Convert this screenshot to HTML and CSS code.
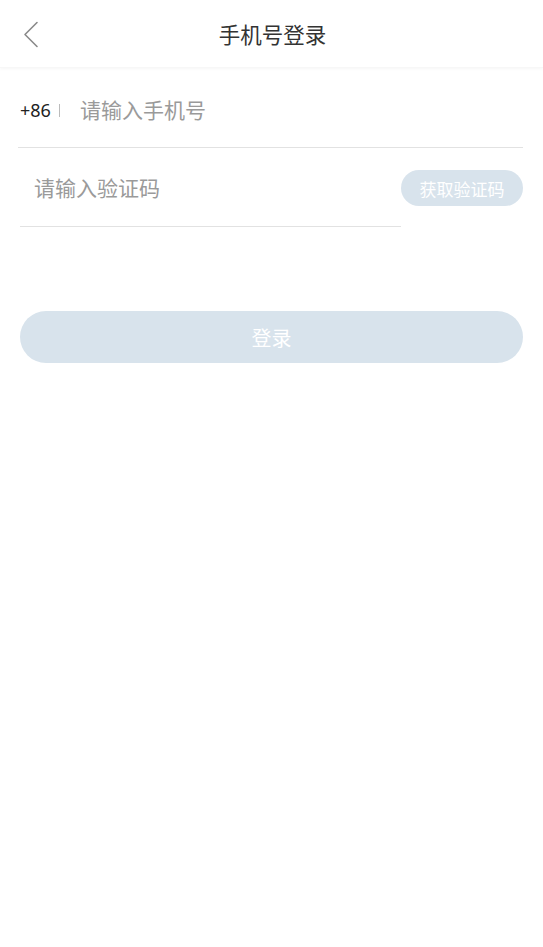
FILE: index.html
```html
<!DOCTYPE html>
<html lang="zh-CN">
<head>
<meta charset="utf-8">
<title>手机号登录</title>
<link rel="stylesheet" href="styles.css">
</head>
<body>
<header class="nav">
  <span class="back">
    <svg width="16" height="28" viewBox="0 0 16 28"><path d="M14 1.5 L2 13.5 L14 25.5" fill="none" stroke="#8a8a8a" stroke-width="1.6" stroke-linecap="round" stroke-linejoin="round"/></svg>
  </span>
  <h1 class="title">手机号登录</h1>
</header>
<main class="form">
  <div class="row phone-row">
    <span class="prefix">+86</span>
    <span class="sep"></span>
    <span class="placeholder">请输入手机号</span>
  </div>
  <div class="code-row">
    <div class="code-input"><span class="placeholder">请输入验证码</span></div>
    <button class="code-btn">获取验证码</button>
  </div>
  <button class="login-btn">登录</button>
</main>
</body>
</html>
```
FILE: styles.css
```css
* { box-sizing: border-box; }
html, body { margin: 0; padding: 0; background: #fff; }
body {
  width: 543px;
  font-family: "Noto Sans CJK SC", "Noto Sans", sans-serif;
  color: #333;
}
.nav {
  position: relative;
  height: 68px;
  display: flex;
  align-items: center;
  justify-content: center;
  box-shadow: 0 1px 3px rgba(0,0,0,0.04);
  border-bottom: 1px solid #f7f7f7;
}
.back {
  position: absolute;
  left: 23px;
  top: 21px;
  width: 16px;
  height: 28px;
  display: block;
}
.back svg { display: block; }
.title {
  margin: 0 0 0 2px;
  font-size: 21.5px;
  font-weight: 400;
  color: #333;
  line-height: 1;
}
.form { padding: 0 20px 0 20px; }
.phone-row {
  display: flex;
  align-items: center;
  height: 80px;
  border-bottom: 1px solid #e2e2e2;
  margin-left: -2px;
  padding-left: 2px;
  padding-top: 4px;
}
.prefix {
  font-family: "Noto Sans", sans-serif;
  font-size: 18px;
  color: #222;
}
.sep {
  width: 1px;
  height: 13px;
  background: #bbb;
  margin: 2px 20px 0 8px;
}
.placeholder {
  font-size: 21px;
  color: #9a9a9a;
  line-height: 1;
}
.code-row {
  display: flex;
  align-items: flex-start;
}
.code-input {
  flex: 1;
  height: 79px;
  border-bottom: 1px solid #e2e2e2;
  display: flex;
  align-items: center;
  padding-left: 14px;
  padding-top: 1px;
}
.code-btn {
  margin-top: 22px;
  width: 122px;
  height: 36px;
  border: none;
  border-radius: 18px;
  background: #d8e3ec;
  color: #fff;
  font-family: "Noto Sans CJK SC", sans-serif;
  font-size: 17px;
  padding: 0;
}
.login-btn {
  display: block;
  width: 100%;
  margin-top: 84px;
  height: 52px;
  border: none;
  border-radius: 26px;
  background: #d8e3ec;
  color: #fff;
  font-family: "Noto Sans CJK SC", sans-serif;
  font-size: 20px;
  padding: 0;
}
```
